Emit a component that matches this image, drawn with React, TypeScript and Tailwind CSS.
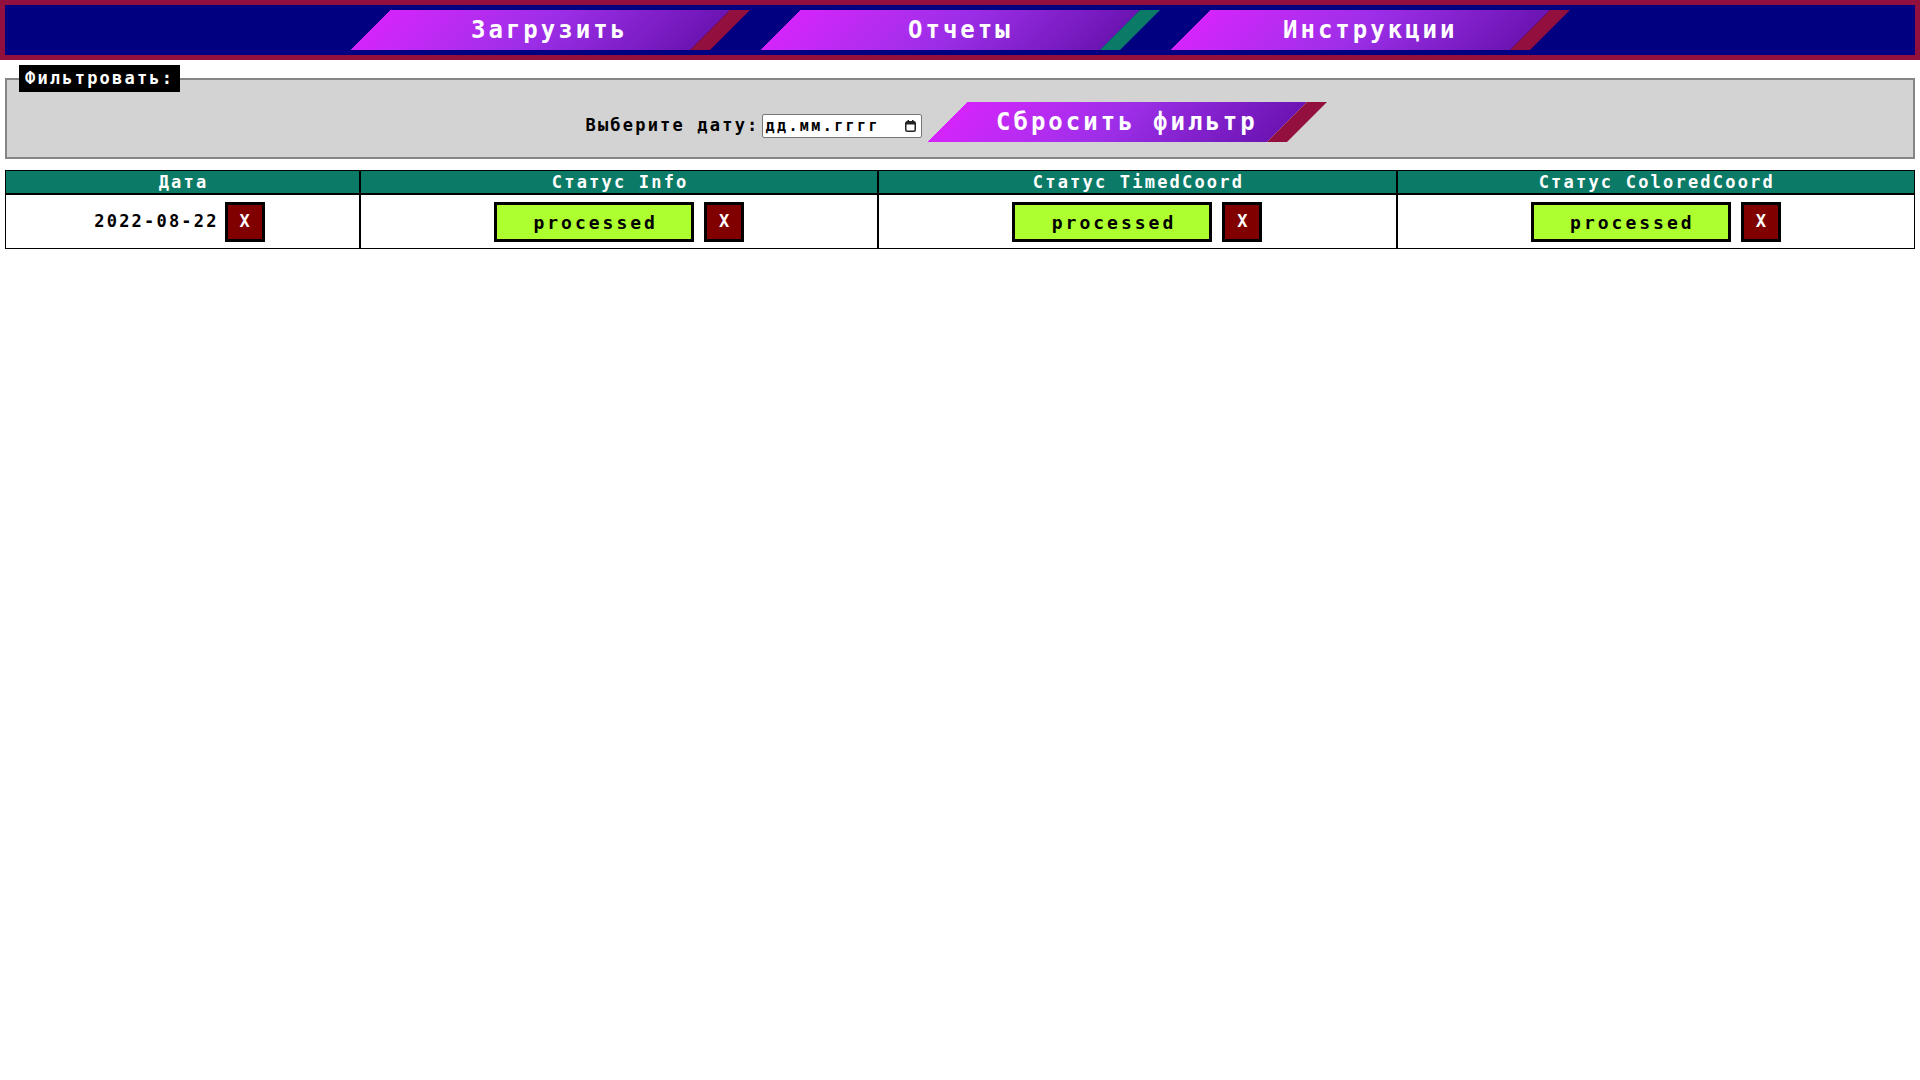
import React from 'react';

type SkewButtonProps = {
  label: string;
  stripe: string;
};

// Slanted nav button: gradient body with a colored stripe on the right
const SkewButton: React.FC<SkewButtonProps> = ({ label, stripe }) => {
  return (
    <button
      className={`h-[40px] w-[360px] shrink-0 cursor-pointer [transform:skewX(-45deg)] border-r-[20px] ${stripe} bg-clip-padding bg-linear-to-r from-[#d424fb] via-[#9d2ee8] to-[#6c14b4] pl-[20px] text-[24px] font-bold tracking-[3px] text-white`}
    >
      <span className="inline-block [transform:skewX(45deg)]">{label}</span>
    </button>
  );
};

const DeleteButton: React.FC = () => (
  <button className="flex h-[40px] w-[40px] shrink-0 items-center justify-center border-[3px] border-black bg-[#800000] text-[17px] font-bold text-white">
    X
  </button>
);

const StatusCell: React.FC<{ status: string }> = ({ status }) => (
  <td className="border border-black pt-[7px] pb-[6px]">
    <div className="flex items-center justify-center gap-[10px]">
      <button className="flex h-[40px] w-[200px] items-center justify-center border-[3px] border-black bg-[#adff2f] pl-[3px] text-[18px] font-bold tracking-[3px] text-black">
        {status}
      </button>
      <DeleteButton />
    </div>
  </td>
);

const App: React.FC = () => {
  const rows = [
    { date: '2022-08-22', info: 'processed', timed: 'processed', colored: 'processed' },
  ];

  return (
    <div className="min-h-screen bg-white text-black [font-family:'DejaVu_Sans_Mono',monospace]">
      {/* Top navigation */}
      <header className="flex h-[60px] items-center justify-center gap-[50px] border-[5px] border-[#930f3e] bg-[#000080]">
        <SkewButton label="Загрузить" stripe="border-[#930f3e]" />
        <SkewButton label="Отчеты" stripe="border-[#0b7a67]" />
        <SkewButton label="Инструкции" stripe="border-[#930f3e]" />
      </header>

      {/* Filter */}
      <fieldset className="mx-[5px] mt-[5px] border-2 border-[#858585] bg-[#d3d3d3] px-[12px] pt-[10px] pb-[15px]">
        <legend className="bg-black px-[6px] py-[3px] text-[17px] font-bold leading-[21px] tracking-[2.2px] text-white">
          Фильтровать:
        </legend>
        <div className="flex items-center justify-center">
          <div className="mt-[8px] flex items-center">
            <span className="text-[17px] font-bold tracking-[2.2px]">Выберите дату:</span>
            <div className="ml-[2px] flex h-[24px] w-[160px] items-center justify-between rounded-[2px] border border-[#767676] bg-white pl-[3px] pr-[5px]">
              <span className="text-[15px] font-bold leading-none tracking-[2.4px]">дд.мм.гггг</span>
              <svg width="11" height="12" viewBox="0 0 11 12" fill="none">
                <rect x="0.75" y="1.75" width="9.5" height="9.5" rx="1.5" stroke="#222" strokeWidth="1.5" />
                <rect x="1" y="2" width="9" height="2.5" fill="#222" />
                <rect x="2.5" y="0" width="1.5" height="2" fill="#222" />
                <rect x="7" y="0" width="1.5" height="2" fill="#222" />
              </svg>
            </div>
          </div>
          <div className="ml-[25px] mr-[28px]">
            <SkewButton label="Сбросить фильтр" stripe="border-[#930f3e]" />
          </div>
        </div>
      </fieldset>

      {/* Status table */}
      <table className="mx-[5px] mt-[11px] w-[1910px] table-fixed border-separate border-spacing-0">
        <colgroup>
          <col className="w-[355px]" />
          <col />
          <col />
          <col />
        </colgroup>
        <thead>
          <tr>
            {['Дата', 'Статус Info', 'Статус TimedCoord', 'Статус ColoredCoord'].map((h) => (
              <th
                key={h}
                className="border border-black bg-[#0b7a67] p-0 pl-[2px] text-[17px] font-bold leading-[22px] tracking-[2.2px] text-white"
              >
                {h}
              </th>
            ))}
          </tr>
        </thead>
        <tbody>
          {rows.map((r) => (
            <tr key={r.date}>
              <td className="border border-black pt-[7px] pb-[6px]">
                <div className="mr-[6px] flex items-center justify-center gap-[6px]">
                  <span className="text-[17px] font-bold tracking-[2.2px]">{r.date}</span>
                  <DeleteButton />
                </div>
              </td>
              <StatusCell status={r.info} />
              <StatusCell status={r.timed} />
              <StatusCell status={r.colored} />
            </tr>
          ))}
        </tbody>
      </table>
    </div>
  );
};

export default App;
